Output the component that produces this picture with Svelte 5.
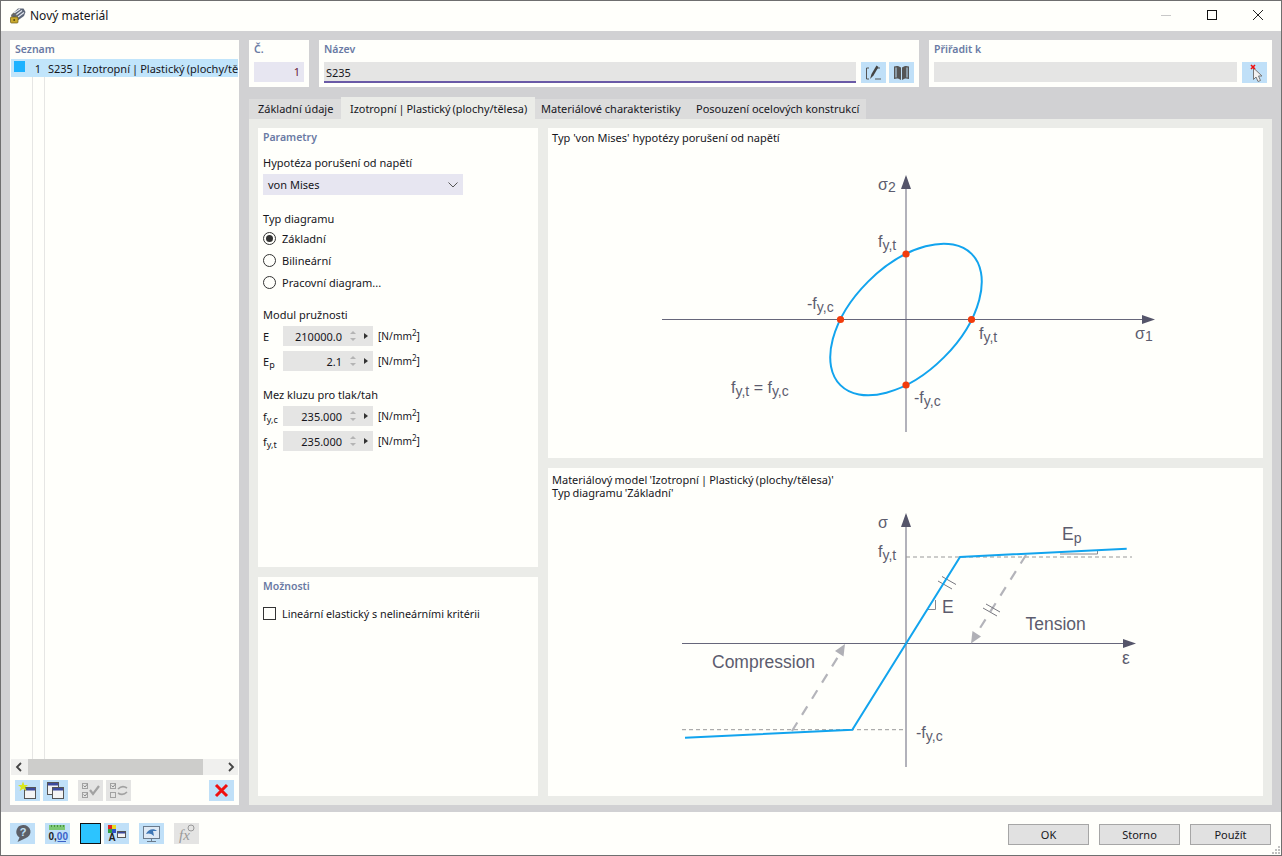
<script>
  const tabs = ['Základní údaje', 'Izotropní | Plastický (plochy/tělesa)', 'Materiálové charakteristiky', 'Posouzení ocelových konstrukcí'];
  const activeTab = 1;
  const diagramTypes = ['Základní', 'Bilineární', 'Pracovní diagram...'];
</script>

{#snippet numField(sym, sub, value)}
  <div class="numrow">
    <span class="sym">{sym}<sub>{sub}</sub></span>
    <div class="numfield">
      <span class="val">{value}</span>
      <span class="spin"><i class="up"></i><i class="down"></i></span>
      <i class="more"></i>
    </div>
    <span class="unit">[N/mm<sup>2</sup>]</span>
  </div>
{/snippet}

<div class="window">
  <header class="titlebar">
    <svg class="appicon" width="17" height="17" viewBox="0 0 17 17">
      <path d="M2 8 L9 1.500 L14.500 1.500 L16.500 5 L15 9 L8 14 L4 13 Z" fill="#5d6678" />
      <path d="M5 6 L11 2M7 8 L13 3.500M9 10 L15 5.500" stroke="#e4e8ef" stroke-width="1.200" fill="none" />
      <rect x="1.500" y="10" width="7.500" height="6" rx="1" fill="#c9a92e" stroke="#6b5a14" stroke-width="0.700" />
      <path d="M3.200 10V8.500a2 2 0 0 1 4 0V10" fill="none" stroke="#77705a" stroke-width="1" />
      <circle cx="5.200" cy="13" r="1" fill="#5a4a10" />
    </svg>
    <span class="title">Nový materiál</span>
    <div class="winctl">
      <svg width="12" height="12" viewBox="0 0 12 12"><path d="M1 6.500H11" stroke="#c8c8c8" /></svg>
      <svg width="12" height="12" viewBox="0 0 12 12"><rect x="1.500" y="1.500" width="9" height="9" fill="none" stroke="#111" /></svg>
      <svg width="12" height="12" viewBox="0 0 12 12"><path d="M1 1L11 11M11 1L1 11" stroke="#222" fill="none" /></svg>
    </div>
  </header>

  <div class="main">
    <aside class="listpanel">
      <h3>Seznam</h3>
      <div class="tree">
        <div class="row">
          <span class="swatch"></span>
          <span class="num">1</span>
          <span class="rowtext">S235 | Izotropní | Plastický (plochy/tělesa)</span>
        </div>
      </div>
      <div class="hscroll">
        <svg width="17" height="16" viewBox="0 0 17 16"><path d="M10 4L6 8L10 12" stroke="#444" stroke-width="1.800" fill="none" /></svg>
        <div class="thumb"></div>
        <svg width="17" height="16" viewBox="0 0 17 16"><path d="M8 4L12 8L8 12" stroke="#444" stroke-width="1.800" fill="none" /></svg>
      </div>
      <div class="listtools">
        <button class="icon" aria-label="Nový">
          <svg width="25" height="21" viewBox="0 0 25 21">
            <rect x="9.500" y="7.500" width="11" height="11" fill="#f4f4f4" stroke="#555" />
            <rect x="10" y="8" width="10" height="2.500" fill="#3c4a9c" />
            <path d="M8 1.500L9.300 5L13 5L10.200 7.300L11.300 11L8 8.800L4.700 11L5.800 7.300L3 5L6.700 5Z" fill="#d8e61c" />
          </svg>
        </button>
        <button class="icon" aria-label="Kopírovat">
          <svg width="25" height="21" viewBox="0 0 25 21">
            <rect x="4.500" y="2.500" width="11" height="12" fill="#f4f4f4" stroke="#555" />
            <rect x="5" y="3" width="10" height="2.500" fill="#3c4a9c" />
            <rect x="9.500" y="7.500" width="11" height="11" fill="#f4f4f4" stroke="#555" />
            <rect x="10" y="8" width="10" height="2.500" fill="#3c4a9c" />
          </svg>
        </button>
        <button class="icon off first-off" aria-label="Zaškrtnout">
          <svg width="25" height="21" viewBox="0 0 25 21">
            <rect x="4.500" y="3.500" width="5" height="5" fill="none" stroke="#a2a2a2" />
            <rect x="4.500" y="12.500" width="5" height="5" fill="none" stroke="#a2a2a2" />
            <path d="M5.500 5.500l1.500 1.500l2.500-3M5.500 14.500l1.500 1.500l2.500-3" stroke="#8c8c8c" fill="none" />
            <path d="M12 10l3 4l6-8" stroke="#a2a2a2" stroke-width="2.200" fill="none" />
          </svg>
        </button>
        <button class="icon off" aria-label="Obrátit">
          <svg width="25" height="21" viewBox="0 0 25 21">
            <rect x="4.500" y="3.500" width="5" height="5" fill="none" stroke="#a2a2a2" />
            <rect x="4.500" y="12.500" width="5" height="5" fill="none" stroke="#a2a2a2" />
            <path d="M5.500 5.500l1.500 1.500l2.500-3" stroke="#8c8c8c" fill="none" />
            <path d="M12 9c3-3 6-3 9-1M21 12c-3 3-6 3-9 1" stroke="#a2a2a2" stroke-width="1.600" fill="none" />
          </svg>
        </button>
        <button class="icon last" aria-label="Smazat">
          <svg width="25" height="21" viewBox="0 0 25 21"><path d="M7 5L18 16M18 5L7 16" stroke="#f01010" stroke-width="3" fill="none" /></svg>
        </button>
      </div>
    </aside>

    <section class="content">
      <div class="toprow">
        <div class="box nobox">
          <h3>Č.</h3>
          <div class="field lilac numinput">1</div>
        </div>
        <div class="box namebox">
          <h3>Název</h3>
          <div class="line">
            <div class="field nameinput">S235</div>
            <button class="icon" aria-label="Upravit">
              <svg width="25" height="21" viewBox="0 0 25 21">
                <path d="M8 6H5.500V17H8M14 17H20M15 6H19" stroke="#555" fill="none" />
                <path d="M9 17L10.500 12L15.500 3.500L17.500 5L12.500 13.500Z" fill="#444" />
              </svg>
            </button>
            <button class="icon" aria-label="Knihovna">
              <svg width="25" height="21" viewBox="0 0 25 21">
                <path d="M5 4.500C8 3.500 10 4 12 5.500V18C10 16.500 8 16 5 17Z" fill="#555" />
                <path d="M20 4.500C17 3.500 15 4 13 5.500V18C15 16.500 17 16 20 17Z" fill="#555" />
                <path d="M7 5.500V15.500M18 5.500V15.500" stroke="#c0e0f8" />
              </svg>
            </button>
          </div>
        </div>
        <div class="box assignbox">
          <h3>Přiřadit k</h3>
          <div class="line">
            <div class="field assigninput"></div>
            <button class="icon" aria-label="Vybrat">
              <svg width="25" height="21" viewBox="0 0 25 21">
                <path d="M11.500 6V17.500L14 15L16 19.500L18.500 18.500L16.500 14H20Z" fill="#f2f2f2" stroke="#777" />
                <path d="M9 3L13 7M13 3L9 7" stroke="#f01010" stroke-width="1.600" />
              </svg>
            </button>
          </div>
        </div>
      </div>

      <nav class="tabs">
        {#each tabs as tab, i}
          <div class="tab" class:active={i === activeTab}>{tab}</div>
        {/each}
      </nav>

      <div class="pane">
        <div class="leftcol">
          <div class="panel params">
            <h3>Parametry</h3>
            <div class="lbl first">Hypotéza porušení od napětí</div>
            <div class="select">
              <span>von Mises</span>
              <svg width="10" height="6" viewBox="0 0 10 6"><path d="M0.500 0.500L5 5L9.500 0.500" stroke="#555" fill="none" /></svg>
            </div>
            <div class="lbl typ">Typ diagramu</div>
            {#each diagramTypes as t, i}
              <div class="radio">
                <span class="dot" class:on={i === 0}></span>
                <span>{t}</span>
              </div>
            {/each}
            <div class="lbl modul">Modul pružnosti</div>
            {@render numField('E', '', '210000.0')}
            {@render numField('E', 'p', '2.1')}
            <div class="lbl mez">Mez kluzu pro tlak/tah</div>
            {@render numField('f', 'y,c', '235.000')}
            {@render numField('f', 'y,t', '235.000')}
          </div>
          <div class="panel options">
            <h3>Možnosti</h3>
            <div class="check">
              <span class="box13"></span>
              <span>Lineární elastický s nelineárními kritérii</span>
            </div>
          </div>
        </div>

        <div class="rightcol">
          <div class="panel hypo">
            <div class="caption">Typ 'von Mises' hypotézy porušení od napětí</div>
            <svg class="plot" width="715" height="300" viewBox="548 158 715 300">
              <path d="M906 177V432" stroke="#b2b2ba" stroke-width="2" />
              <path d="M906 175L901 189H911Z" fill="#55556a" />
              <path d="M662 319.500H1145" stroke="#66667a" />
              <path d="M1155 319.500L1142 315V324Z" fill="#55556a" />
              <ellipse cx="906" cy="319.500" rx="92.800" ry="53.600" transform="rotate(-45 906 319.500)" fill="none" stroke="#12a4ee" stroke-width="2" />
              <circle cx="906" cy="254" r="3.600" fill="#f23c0c" />
              <circle cx="971.500" cy="319.500" r="3.600" fill="#f23c0c" />
              <circle cx="840.500" cy="319.500" r="3.600" fill="#f23c0c" />
              <circle cx="906" cy="385" r="3.600" fill="#f23c0c" />
              <g class="dia">
                <text x="878" y="190">σ<tspan class="s" dy="2">2</tspan></text>
                <text x="1135" y="339">σ<tspan class="s" dy="2">1</tspan></text>
                <text x="878" y="247">f<tspan class="s" dy="3">y,t</tspan></text>
                <text x="979" y="339">f<tspan class="s" dy="3">y,t</tspan></text>
                <text x="807" y="309">-f<tspan class="s" dy="3">y,c</tspan></text>
                <text x="914" y="403">-f<tspan class="s" dy="3">y,c</tspan></text>
                <text x="731" y="393">f<tspan class="s" dy="3">y,t</tspan><tspan dy="-3">{'\u00a0=\u00a0'}f</tspan><tspan class="s" dy="3">y,c</tspan></text>
              </g>
            </svg>
          </div>
          <div class="panel model">
            <div class="caption">Materiálový model 'Izotropní | Plastický (plochy/tělesa)'<br />Typ diagramu 'Základní'</div>
            <svg class="plot" width="715" height="288" viewBox="548 508 715 288">
              <path d="M906 515V767" stroke="#b2b2ba" stroke-width="2" />
              <path d="M906 513L901 527H911Z" fill="#55556a" />
              <path d="M682 643.500H1125" stroke="#66667a" />
              <path d="M1136 643.500L1123 639V648Z" fill="#55556a" />
              <path d="M906 557H1132M682 729.700H906" stroke="#999" stroke-dasharray="4 3" fill="none" />
              <path d="M1026 555L975 636" stroke="#b4b4ba" stroke-width="2.200" stroke-dasharray="10 9" fill="none" />
              <path d="M971 643.500L972.500 631L981 636.500Z" fill="#b0b0b6" />
              <path d="M792 731L841 652" stroke="#b4b4ba" stroke-width="2.200" stroke-dasharray="10 9" fill="none" />
              <path d="M845 644L843.500 656.500L835 651Z" fill="#b0b0b6" />
              <path d="M938 581L952 589M942 576.500L956 584.500M983 608L997 616M986 604L1000 612" stroke="#77777f" fill="none" />
              <path d="M935.500 600V609.500H928M1097.500 550.500V554H1060" stroke="#88888f" fill="none" />
              <path d="M685 737.700L852.300 729.700L960 557L1126.700 548.700" stroke="#12a4ee" stroke-width="2" fill="none" />
              <g class="dia">
                <text x="878" y="528">σ</text>
                <text x="878" y="557">f<tspan class="s" dy="3">y,t</tspan></text>
                <text x="916" y="738">-f<tspan class="s" dy="3">y,c</tspan></text>
                <text class="big" x="1062" y="540">E<tspan class="s" dy="3">p</tspan></text>
                <text class="big" x="942" y="613">E</text>
                <text class="big" x="1025.500" y="630">Tension</text>
                <text class="big" x="712" y="668">Compression</text>
                <text class="big" x="1122" y="664">ε</text>
              </g>
            </svg>
          </div>
        </div>
      </div>
    </section>
  </div>

  <footer class="footer">
    <div class="foottools">
      <button class="icon" aria-label="Nápověda">
        <svg width="25" height="21" viewBox="0 0 25 21">
          <path d="M13 2a7 6.800 0 0 1 2.500 13.300L7.500 19l2-4.500A7 6.800 0 0 1 13 2Z" fill="#5c6068" />
          <text x="13" y="13" class="q">?</text>
        </svg>
      </button>
      <button class="icon gap" aria-label="Jednotky">
        <svg width="25" height="21" viewBox="0 0 25 21">
          <rect x="4" y="2" width="16" height="5" fill="#7cc873" />
          <path d="M6.500 2v2M9.500 2v2M12.500 2v2M15.500 2v2M18.500 2v2" stroke="#4a9145" />
          <text x="3.500" y="16.500" class="zero">0,<tspan fill="#3b62c8">00</tspan></text>
          <path d="M12.500 18.500H21" stroke="#3b62c8" />
        </svg>
      </button>
      <div class="colorswatch"></div>
      <button class="icon" aria-label="Barvy">
        <svg width="25" height="21" viewBox="0 0 25 21">
          <rect x="4" y="2" width="4" height="4" fill="#e02020" />
          <rect x="8" y="2" width="4" height="4" fill="#e8d820" />
          <rect x="4" y="6" width="4" height="4" fill="#30a040" />
          <rect x="8" y="6" width="4" height="4" fill="#3050c8" />
          <rect x="13.500" y="8.500" width="8" height="6" fill="#f4f4f4" stroke="#555" />
          <rect x="14" y="9" width="7" height="1.500" fill="#3c4a9c" />
          <text x="4.500" y="18" class="a">A</text>
        </svg>
      </button>
      <button class="icon gap" aria-label="Zobrazení">
        <svg width="25" height="21" viewBox="0 0 25 21">
          <rect x="4.500" y="3.500" width="16" height="12" fill="#dfeaf5" stroke="#6b7b8c" />
          <path d="M7 11C9 6 15 5 18 8L14 8L15 13C12 10 9 10 7 11Z" fill="#3f77b5" />
          <path d="M12.500 15.500V18M8 18.500H17" stroke="#6b7b8c" />
        </svg>
      </button>
      <button class="icon off gap" aria-label="Funkce">
        <svg width="25" height="21" viewBox="0 0 25 21">
          <text x="5" y="17" class="fx">fx</text>
          <circle cx="17" cy="5" r="3" fill="none" stroke="#999" />
        </svg>
      </button>
    </div>
    <div class="actions">
      <button class="act">OK</button>
      <button class="act">Storno</button>
      <button class="act">Použít</button>
    </div>
    <svg class="grip" width="9" height="9" viewBox="0 0 9 9">
      <path d="M7 1h2v2h-2zM4 4h2v2h-2zM7 4h2v2h-2zM1 7h2v2h-2zM4 7h2v2h-2zM7 7h2v2h-2z" fill="#c0c0c0" />
    </svg>
  </footer>
</div>

<style>
  :global(body) {
    margin: 0;
    background: #fffffb;
  }
  .window {
    position: relative;
    box-sizing: border-box;
    width: 1282px;
    height: 856px;
    display: flex;
    flex-direction: column;
    border: 1px solid #6f6f6f;
    background: #fffffb;
    font-family: "Noto Sans", sans-serif;
    font-size: 11px;
    color: #16161c;
  }
  h3 {
    margin: 0;
    font-size: 10.500px;
    font-weight: 600;
    color: #6a7aa4;
    line-height: 16px;
  }
  button {
    font-family: inherit;
    border: none;
    padding: 0;
  }

  .titlebar {
    height: 30px;
    box-sizing: border-box;
    padding: 0 0 2px 8px;
    display: flex;
    align-items: center;
    flex: none;
  }
  .appicon {
    margin-right: 4px;
  }
  .title {
    font-size: 12px;
  }
  .winctl {
    margin-left: auto;
    display: flex;
    gap: 34px;
    margin-right: 17px;
  }

  .main {
    flex: 1;
    min-height: 0;
    background: #d1d1d3;
    padding: 9px 9px 7px;
    display: flex;
    gap: 10px;
  }

  .listpanel {
    width: 229px;
    flex: none;
    background: #fffffb;
    display: flex;
    flex-direction: column;
  }
  .listpanel h3 {
    padding: 1px 0 2px 5px;
  }
  .tree {
    flex: 1;
    margin: 0 1px;
    position: relative;
    overflow: hidden;
    background:
      linear-gradient(#e6e6e4, #e6e6e4) 21px 0 / 1px 100% no-repeat,
      linear-gradient(#e6e6e4, #e6e6e4) 33px 0 / 1px 100% no-repeat;
  }
  .row {
    height: 18px;
    display: flex;
    align-items: center;
    background: #c1e5fb;
    white-space: nowrap;
    overflow: hidden;
  }
  .swatch {
    width: 11px;
    height: 11px;
    background: #1cb2ff;
    margin: 0 0 3px 3px;
    flex: none;
  }
  .num {
    width: 16px;
    text-align: right;
    flex: none;
  }
  .rowtext {
    margin-left: 7px;
    word-spacing: -0.800px;
  }
  .hscroll {
    height: 16px;
    margin: 0 1px;
    background: #f0f0ee;
    display: flex;
    flex: none;
  }
  .thumb {
    width: 175px;
    background: #cdcdcb;
  }
  .hscroll svg:last-child {
    margin-left: auto;
  }
  .listtools {
    height: 30px;
    box-sizing: border-box;
    display: flex;
    align-items: flex-start;
    gap: 3px;
    padding: 5px 5px 0;
    flex: none;
  }
  .icon {
    width: 25px;
    height: 21px;
    background: #c0e0f8;
    flex: none;
    display: block;
  }
  .icon svg {
    display: block;
  }
  .icon.off {
    background: #e4e4e3;
  }
  .first-off {
    margin-left: 7px;
  }
  .last {
    margin-left: auto;
  }

  .content {
    flex: 1;
    min-width: 0;
    display: flex;
    flex-direction: column;
  }
  .toprow {
    height: 47px;
    display: flex;
    gap: 10px;
    flex: none;
  }
  .box {
    background: #fffffb;
    padding: 1px 5px 0;
    box-sizing: border-box;
  }
  .box h3 {
    margin-bottom: 5px;
  }
  .nobox {
    width: 60px;
  }
  .namebox {
    width: 600px;
  }
  .assignbox {
    flex: 1;
  }
  .line {
    display: flex;
    gap: 3px;
  }
  .field {
    height: 20px;
    line-height: 20px;
    background: #e5e5e4;
    box-sizing: border-box;
  }
  .lilac {
    background: #e7e6f1;
  }
  .numinput {
    text-align: right;
    padding-right: 4px;
    color: #6a1a3a;
  }
  .nameinput {
    width: 532px;
    height: 21px;
    line-height: 22px;
    padding-left: 2px;
    border-bottom: 2px solid #6a5aa6;
    margin-right: 2px;
  }
  .assigninput {
    width: 303px;
    margin-right: 2px;
  }

  .tabs {
    margin-top: 10px;
    height: 22px;
    display: flex;
    align-items: flex-end;
    flex: none;
  }
  .tab {
    height: 20px;
    line-height: 20px;
    background: #dcdcdc;
    padding: 0 8px;
    white-space: nowrap;
  }
  .tab:nth-child(1) { width: 92px; padding-left: 9px; box-sizing: border-box; }
  .tab:nth-child(2) { width: 194px; padding-left: 9px; box-sizing: border-box; }
  .tab:nth-child(3) { width: 153px; padding-left: 6px; box-sizing: border-box; }
  .tab:nth-child(4) { width: 178px; padding-left: 8px; box-sizing: border-box; }
  .tab.active {
    height: 22px;
    line-height: 24px;
    background: #ebece8;
    word-spacing: -0.800px;
    font-size: 10.900px;
  }

  .pane {
    flex: 1;
    min-height: 0;
    background: #ebece8;
    padding: 9px;
    display: flex;
    gap: 10px;
  }
  .leftcol {
    width: 280px;
    flex: none;
    display: flex;
    flex-direction: column;
    gap: 10px;
  }
  .rightcol {
    flex: 1;
    min-width: 0;
    display: flex;
    flex-direction: column;
    gap: 10px;
  }
  .panel {
    background: #fffffb;
    box-sizing: border-box;
  }
  .params {
    height: 439px;
    padding: 1px 5px 0;
  }
  .options {
    flex: 1;
    padding: 1px 5px 0;
  }
  .hypo {
    height: 330px;
  }
  .model {
    flex: 1;
  }
  .caption {
    padding: 3px 4px 0;
    line-height: 13px;
    height: 28px;
    box-sizing: border-box;
  }
  .model .caption {
    height: 40px;
    padding-top: 5px;
    word-spacing: -0.700px;
  }
  .plot {
    display: block;
    margin-top: 2px;
  }
  .model .plot {
    margin-top: 0;
  }
  .dia text {
    font-family: "Liberation Sans", sans-serif;
    font-size: 16px;
    fill: #5c5c6e;
  }
  .dia text .s {
    font-size: 14px;
  }
  .dia text.big {
    font-size: 17.500px;
  }

  .lbl {
    line-height: 16px;
  }
  .lbl.first {
    margin-top: 10px;
  }
  .select {
    width: 200px;
    height: 21px;
    margin-top: 3px;
    background: #e7e6f1;
    display: flex;
    align-items: center;
    justify-content: space-between;
    padding: 0 5px;
    box-sizing: border-box;
  }
  .lbl.typ {
    margin-top: 16px;
  }
  .radio {
    height: 22px;
    display: flex;
    align-items: center;
    gap: 6px;
  }
  .dot {
    width: 13px;
    height: 13px;
    box-sizing: border-box;
    border: 1px solid #333;
    border-radius: 50%;
    background: #fffffb;
    position: relative;
    flex: none;
  }
  .dot.on::after {
    content: '';
    position: absolute;
    left: 2px;
    top: 2px;
    width: 7px;
    height: 7px;
    border-radius: 50%;
    background: #333;
  }
  .lbl.modul {
    margin-top: 14px;
    margin-bottom: 3px;
  }
  .lbl.mez {
    margin-top: 16px;
    margin-bottom: 3px;
  }
  .numrow {
    height: 20px;
    margin-bottom: 5px;
    display: flex;
    align-items: center;
  }
  .sym {
    width: 20px;
    flex: none;
  }
  .sym sub {
    font-size: 9px;
    vertical-align: -2px;
    line-height: 0;
  }
  .numfield {
    width: 90px;
    height: 20px;
    background: #e5e5e4;
    display: flex;
    align-items: center;
    flex: none;
    position: relative;
  }
  .val {
    width: 59px;
    text-align: right;
    flex: none;
  }
  .spin {
    width: 7px;
    margin-left: 8px;
    display: flex;
    flex-direction: column;
    gap: 4px;
  }
  .spin i {
    display: block;
    width: 0;
    height: 0;
    border-left: 3px solid transparent;
    border-right: 3px solid transparent;
  }
  .spin .up {
    border-bottom: 3px solid #b4b4b4;
  }
  .spin .down {
    border-top: 3px solid #b4b4b4;
  }
  .more {
    margin-left: 7px;
    width: 0;
    height: 0;
    border-top: 3.500px solid transparent;
    border-bottom: 3.500px solid transparent;
    border-left: 4px solid #333;
  }
  .unit {
    margin-left: 5px;
    font-size: 10.200px;
  }
  .unit sup {
    font-size: 8px;
    vertical-align: 4px;
    line-height: 0;
  }
  .check {
    margin-top: 11px;
    display: flex;
    align-items: center;
    gap: 6px;
    height: 16px;
    font-size: 10.800px;
  }
  .box13 {
    width: 13px;
    height: 13px;
    border: 1px solid #333;
    box-sizing: border-box;
    background: #fffffb;
  }

  .footer {
    height: 43px;
    flex: none;
    display: flex;
    align-items: flex-start;
    padding: 11px 10px 0 9px;
    box-sizing: border-box;
    background: #fffffb;
  }
  .foottools {
    display: flex;
    gap: 0;
  }
  .foottools .gap {
    margin-left: 10px;
  }
  .colorswatch {
    width: 21px;
    height: 21px;
    box-sizing: border-box;
    border: 1px solid #111;
    background: #2cc4ff;
    margin: 0 3px 0 10px;
  }
  .q {
    font-family: "Liberation Sans", sans-serif;
    font-weight: bold;
    font-size: 11px;
    text-anchor: middle;
    fill: #c0e0f8;
  }
  .zero {
    font-family: "Liberation Sans", sans-serif;
    font-weight: bold;
    font-size: 10px;
    fill: #222;
  }
  .a {
    font-family: "Liberation Sans", sans-serif;
    font-weight: bold;
    font-size: 10px;
    fill: #222;
  }
  .fx {
    font-family: "Liberation Serif", serif;
    font-style: italic;
    font-size: 15px;
    fill: #999;
  }
  .actions {
    margin-left: auto;
    display: flex;
    gap: 10px;
    margin-top: 1px;
  }
  .act {
    width: 81px;
    height: 21px;
    box-sizing: border-box;
    border: 1px solid #a6a6a6;
    background: #e1e1e1;
    color: #16161c;
    font-size: 11px;
  }
  .grip {
    position: absolute;
    right: 1px;
    bottom: 1px;
  }
</style>
